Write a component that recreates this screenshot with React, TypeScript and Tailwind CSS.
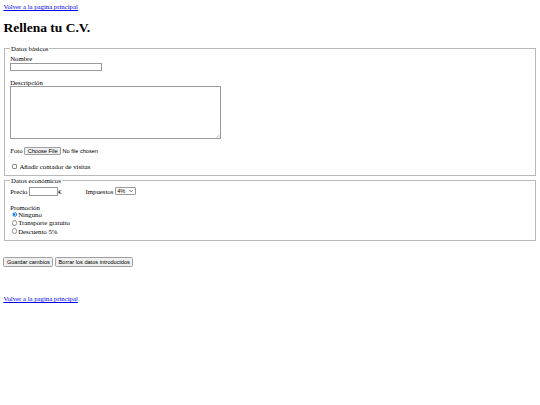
import { ChevronDown } from "lucide-react";

// Formulario de C.V. con el aspecto por defecto del navegador, reducido a 540px.
const linkCls = "text-[#0000ee] underline";
const fieldsetCls = "mx-[0.85px] border border-[#b9b9b9] px-[5px] pt-[2.4px] pb-[4.6px]";
const legendCls = "px-[0.85px]";
const btnCls =
  "inline-flex h-[10px] items-center rounded-[1.5px] border border-[#a0a0a0] bg-[#efefef] px-[2.5px] font-['Liberation_Sans',Arial,sans-serif] text-[5.6px] leading-[normal] text-black";

function Radio({ label, checked }: { label: string; checked?: boolean }) {
  return (
    <label className="flex h-[8.2px] items-center">
      <span
        className={
          "ml-[1.3px] mr-[1.3px] inline-flex h-[5.4px] w-[5.4px] items-center justify-center rounded-full border " +
          (checked ? "border-[#0075ff] bg-[#0075ff]" : "border-[#8f8f8f] bg-white")
        }
      >
        {checked ? <span className="h-[2.4px] w-[2.4px] rounded-full bg-[#0075ff] ring-[0.8px] ring-white" /> : null}
      </span>
      {label}
    </label>
  );
}

export default function App() {
  return (
    <div className="min-h-[405px] bg-white p-[3.4px] font-['Liberation_Serif','Times_New_Roman',serif] text-[6.75px] leading-[normal] text-black">
      <div className="h-[7.8px]">
        <a href="#" className={linkCls}>Volver a la pagina principal</a>
      </div>
      <h1 className="my-[9px] text-[13.5px] font-bold leading-[normal]">Rellena tu C.V.</h1>

      <form>
        <fieldset className={fieldsetCls}>
          <legend className={legendCls}>Datos básicos</legend>
          <div className="mt-[0.6px]">Nombre</div>
          <input type="text" className="mt-[0.6px] block h-[8.2px] w-[92px] border border-[#9a9a9a] bg-white" />
          <div className="mt-[7.6px]">Descripción</div>
          <div className="relative mt-[0.4px] h-[53px] w-[211px]">
            <textarea className="block h-full w-full resize-none border border-[#9a9a9a] bg-white" />
            <svg className="absolute bottom-[1px] right-[1px]" width="4" height="4" viewBox="0 0 4 4">
              <path d="M0.5 3.6 L3.6 0.5 M2 3.6 L3.6 2" stroke="#9a9a9a" strokeWidth="0.5" fill="none" />
            </svg>
          </div>
          <div className="mt-[7.5px] flex h-[8.6px] items-center">
            <span className="mr-[1.7px]">Foto</span>
            <span className="inline-flex h-[8.4px] items-center rounded-[1px] border border-[#a0a0a0] bg-[#efefef] px-[2.4px] font-['Liberation_Sans',Arial,sans-serif] text-[5.6px] leading-[normal]">
              Choose File
            </span>
            <span className="ml-[1.6px] font-['Liberation_Sans',Arial,sans-serif] text-[5.6px]">No file chosen</span>
          </div>
          <div className="mt-[7.4px] flex h-[8.2px] items-center">
            <span className="mx-[1.3px] inline-block h-[5.2px] w-[5.2px] rounded-[1px] border border-[#8f8f8f] bg-white" />
            <span className="ml-[1.4px]">Añadir contador de visitas</span>
          </div>
        </fieldset>

        <fieldset className={"mt-[1px] " + fieldsetCls}>
          <legend className={legendCls}>Datos económicos</legend>
          <div className="mt-[0.2px] flex h-[9.4px] items-center">
            <span className="mr-[1.7px]">Precio</span>
            <input type="text" className="h-[8.2px] w-[29px] border border-[#9a9a9a] bg-white" />
            <span>€</span>
            <span className="ml-[24px] mr-[1.7px]">Impuestos</span>
            <span className="inline-flex h-[8px] w-[21px] items-center justify-between rounded-[1px] border border-[#9a9a9a] bg-white pl-[1.2px] pr-[1.5px] font-['Liberation_Sans',Arial,sans-serif] text-[5.6px] leading-[normal]">
              <span>4%</span>
              <ChevronDown className="h-[4.2px] w-[4.2px]" strokeWidth={4} />
            </span>
          </div>
          <div className="mt-[7.4px]">Promoción</div>
          <Radio label="Ninguno" checked />
          <Radio label="Transporte gratuito" />
          <Radio label="Descuento 5%" />
        </fieldset>

        <div className="mt-[15.8px] flex gap-[1.8px]">
          <button type="button" className={btnCls}>Guardar cambios</button>
          <button type="button" className={btnCls}>Borrar los datos introducidos</button>
        </div>
      </form>

      <div className="mt-[28.6px] h-[7.8px]">
        <a href="#" className={linkCls}>Volver a la pagina principal</a>
      </div>
    </div>
  );
}
